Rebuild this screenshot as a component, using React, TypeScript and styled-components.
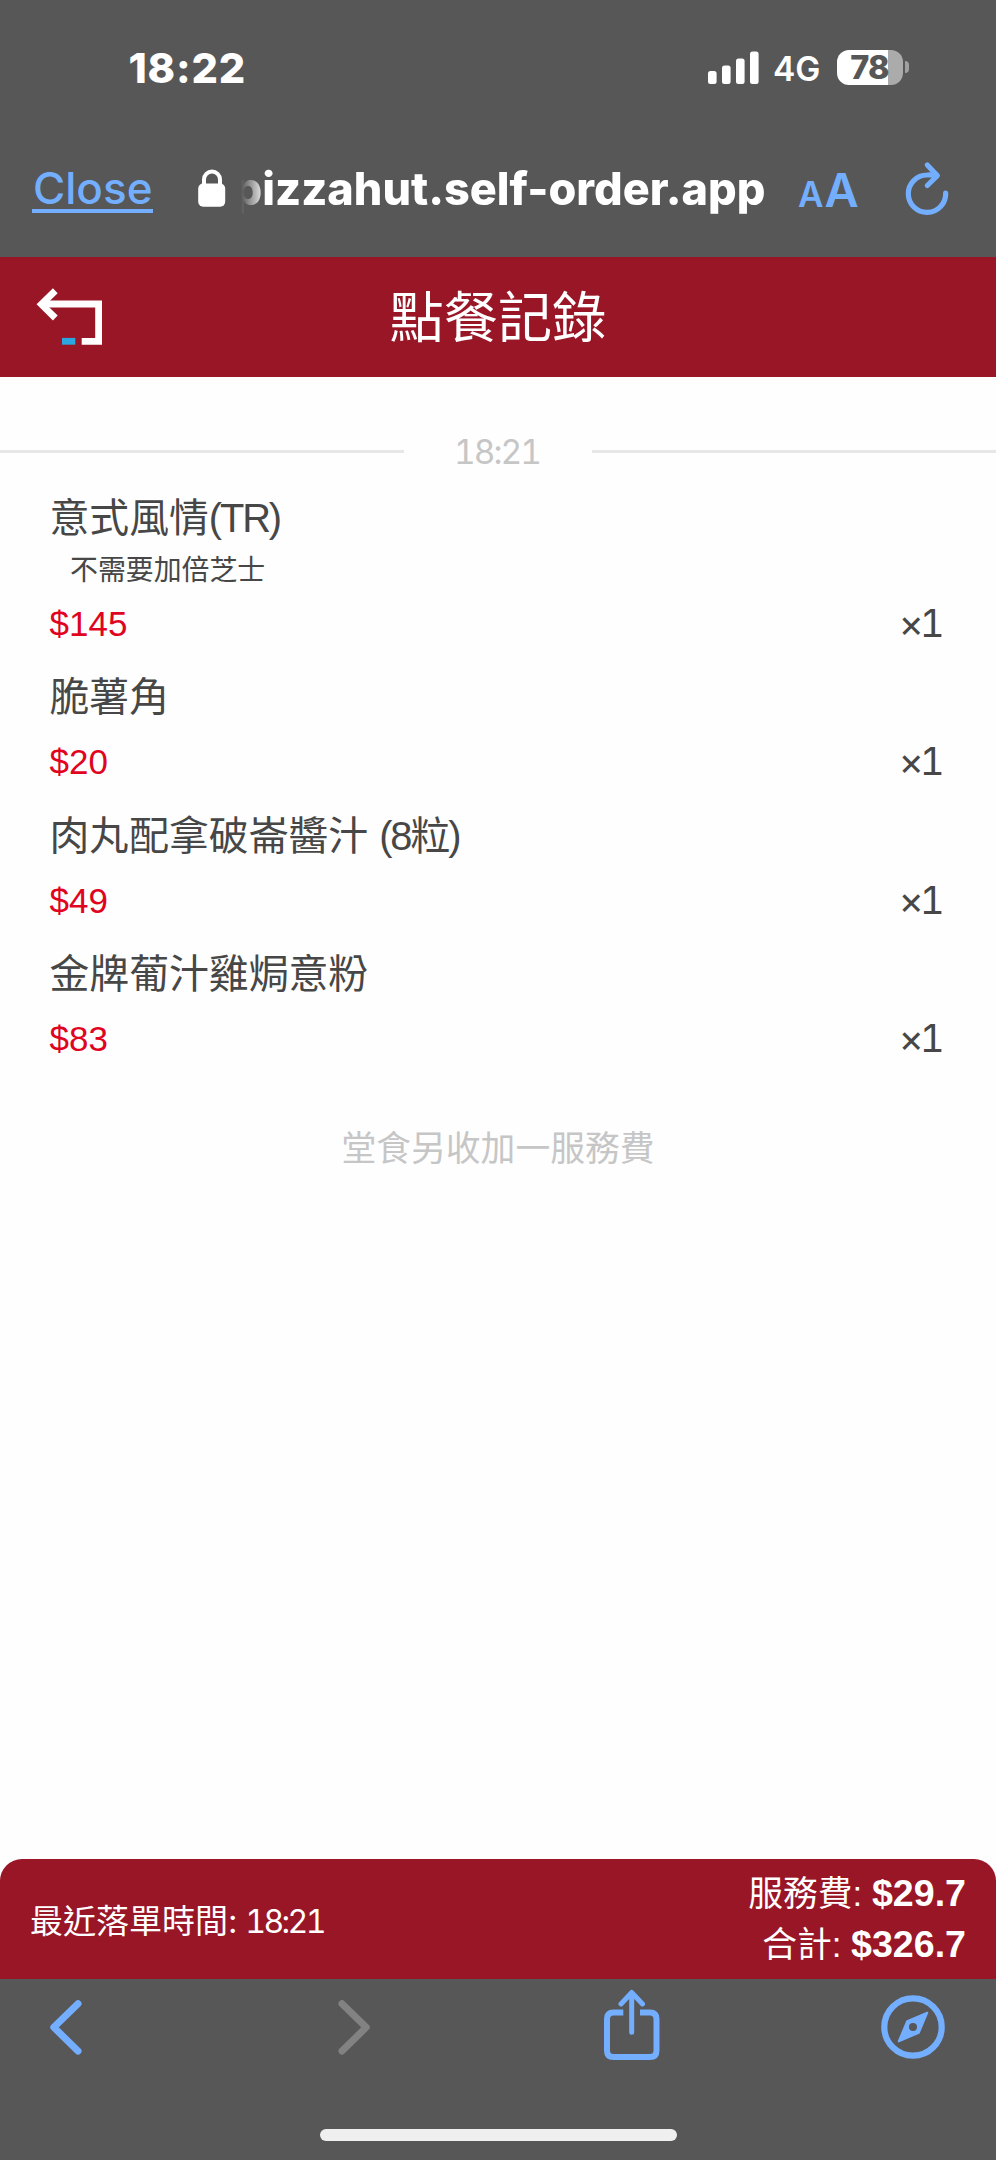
import React from "react";
import styled, { createGlobalStyle } from "styled-components";

const color = {
  chrome: "#575757",
  brand: "#991627",
  link: "#73aeff",
  price: "#e0041f",
  text: "#474747",
  muted: "#c6c6c6",
};

const digits = `Inter, "Noto Sans CJK TC", sans-serif`;
const body = `"Liberation Sans", "Noto Sans CJK TC", sans-serif`;

const GlobalStyle = createGlobalStyle`
  * { box-sizing: border-box; }
  body { margin: 0; background: #fff; }
`;

const Screen = styled.div`
  display: flex;
  flex-direction: column;
  width: 996px;
  height: 2160px;
  overflow: hidden;
  background: #fefefe;
  color: ${color.text};
  font-family: ${body};
  white-space: nowrap;
  svg { display: block; flex: none; }
`;

const StatusBar = styled.div`
  display: flex;
  justify-content: space-between;
  height: 129px;
  padding: 42px 87px 0 128.5px;
  background: ${color.chrome};
  color: #fff;
  font-family: ${digits};
`;

const Clock = styled.div`
  height: 52px;
  line-height: 52px;
  font-size: 41.5px;
  font-weight: 800;
  letter-spacing: 0.8px;
`;

const Indicators = styled.div`
  display: flex;
  align-items: center;
  height: 50px;
`;

const Network = styled.span`
  width: 48px;
  margin: 3px 16px 0 14px;
  font-size: 33.5px;
  line-height: 40px;
  font-weight: 600;
`;

const Battery = styled.div`
  display: flex;
  align-items: center;
  justify-content: center;
  width: 66px;
  height: 35px;
  padding-right: 1px;
  border-radius: 12px;
  background: linear-gradient(90deg, #fff 78%, #ababab 78%);
  color: ${color.chrome};
  font-size: 32.5px;
  line-height: 35px;
  font-weight: 800;
  letter-spacing: -0.8px;
`;

const BatteryTip = styled.div`
  width: 4px;
  height: 12px;
  margin-left: 2px;
  border-radius: 0 5px 5px 0;
  background: #a0a0a0;
`;

const AddressBar = styled.div`
  display: flex;
  height: 128px;
  padding: 30px 45px 0 32px;
  background: ${color.chrome};
  color: #fff;
  font-family: ${digits};
`;

const Close = styled.a`
  width: 121px;
  height: 54px;
  padding-left: 1px;
  border-bottom: 4px solid ${color.link};
  color: ${color.link};
  font-size: 44px;
  font-weight: 500;
  line-height: 59px;
`;

const LockBox = styled.div`
  padding: 10px 0 0 44.5px;
`;

const Url = styled.div`
  display: flex;
  justify-content: flex-end;
  width: 540px;
  height: 60px;
  font-size: 45px;
  font-weight: 800;
  line-height: 59px;
  mask-image: linear-gradient(90deg, transparent 15px, #000 40px);
`;

const TextSize = styled.div`
  display: flex;
  align-items: baseline;
  gap: 1px;
  width: 62px;
  height: 60px;
  margin-left: 32.5px;
  color: ${color.link};
  font-weight: 600;
  line-height: 61px;
`;

const Letter = styled.span<{ $size: number }>`
  font-size: ${(p) => p.$size}px;
`;

const ReloadBox = styled.div`
  margin: -4px 0 0 39.5px;
`;

const Header = styled.header`
  display: grid;
  grid-template-columns: 120px 1fr 120px;
  height: 120px;
  background: ${color.brand};
  color: #fff;
`;

const BackBox = styled.div`
  padding: 30px 0 0 36px;
`;

const Title = styled.h1`
  margin: 0;
  text-align: center;
  font-size: 54.2px;
  font-weight: 400;
  line-height: 122px;
`;

const Orders = styled.main`
  flex: 1;
  background: #fefefe;
`;

const Divider = styled.div`
  display: grid;
  grid-template-columns: 1fr 188px 1fr;
  align-items: center;
  height: 50px;
  margin-top: 49.5px;
  color: ${color.muted};
  font-family: ${digits};
  font-size: 33.5px;
  line-height: 50px;
  text-align: center;
  text-indent: -2px;
  letter-spacing: -2px;
  font-feature-settings: "tnum";
  &::before,
  &::after {
    content: "";
    height: 3px;
    background: #e7e7e7;
  }
`;

const List = styled.ul`
  margin: 9px 0 0;
  padding: 0 55px 0 49.5px;
  list-style: none;
`;

const Item = styled.li`
  padding-bottom: 8.5px;
`;

const Name = styled.div`
  height: 64px;
  font-size: 39.84px;
  line-height: 65px;
`;

const Suffix = styled.span`
  letter-spacing: -2.1px;
`;

const Note = styled.div`
  height: 41px;
  padding-left: 20.5px;
  font-size: 27.9px;
  line-height: 42px;
`;

const PriceRow = styled.div`
  display: flex;
  justify-content: space-between;
  height: 66px;
  line-height: 66px;
`;

const Price = styled.span`
  color: ${color.price};
  font-size: 35px;
`;

const Quantity = styled.span`
  font-family: ${digits};
  font-feature-settings: "tnum";
  font-size: 38.5px;
  line-height: 64px;
  letter-spacing: -3.8px;
`;

const Hint = styled.p`
  margin: 43px 0 0;
  color: ${color.muted};
  font-size: 34.8px;
  line-height: 50px;
  text-align: center;
`;

const Footer = styled.footer`
  display: flex;
  justify-content: space-between;
  height: 120px;
  padding: 0 30px;
  border-radius: 22px 22px 0 0;
  background: ${color.brand};
  color: #fff;
`;

const LastOrder = styled.div`
  font-family: ${digits};
  font-size: 33px;
  line-height: 125px;
  span {
    margin-left: -1.5px;
    font-size: 32px;
    letter-spacing: -2.6px;
    font-feature-settings: "tnum";
  }
`;

const Totals = styled.div`
  padding-top: 9px;
  text-align: right;
`;

const TotalLine = styled.div`
  height: 51px;
  font-size: 34.8px;
  line-height: 51px;
  b { font-size: 37.6px; }
`;

const Toolbar = styled.nav`
  display: flex;
  height: 150px;
  padding: 8px 0 0 48px;
  background: ${color.chrome};
`;

const Tool = styled.div<{ $before?: number }>`
  margin-left: ${(p) => p.$before ?? 0}px;
`;

const HomeArea = styled.div`
  display: flex;
  justify-content: center;
  height: 31px;
  background: ${color.chrome};
`;

const HomeIndicator = styled.div`
  width: 357px;
  height: 12px;
  border-radius: 6px;
  background: #efefef;
`;

const SignalIcon = () => (
  <svg width="51" height="33" viewBox="0 0 51 33" fill="#fff">
    <rect x="0" y="20" width="8.6" height="13" rx="2.5" />
    <rect x="14" y="14.5" width="8.6" height="18.5" rx="2.5" />
    <rect x="28" y="7.5" width="8.6" height="25.5" rx="2.5" />
    <rect x="42" y="0.5" width="8.6" height="32.5" rx="2.5" />
  </svg>
);

const LockIcon = () => (
  <svg width="28" height="38" viewBox="0 0 28 38">
    <path d="M6 17V10.5a8 8 0 0 1 16 0V17" fill="none" stroke="#fff" strokeWidth="4" />
    <rect x="0.2" y="14.5" width="27" height="23.3" rx="5" fill="#fff" />
  </svg>
);

const ReloadIcon = () => (
  <svg width="50" height="62" viewBox="0 0 50 62" fill="none" stroke={color.link} strokeWidth="5.2" strokeLinecap="round" strokeLinejoin="round">
    <path d="M45.7 38A18.7 18.7 0 1 1 27 20Q32 19.6 36.5 20.8" />
    <path d="M27.3 10L37.3 20.6L27.3 30.5" />
  </svg>
);

const BackIcon = () => (
  <svg width="68" height="60" viewBox="0 0 68 60" fill="none" stroke="#fff" strokeWidth="6.8">
    <path d="M19.3 3.7L5.4 17.3L19.3 31" />
    <path d="M6 17H62.6V54.3H45.7" />
    <path d="M26 54.3H39.3" stroke="#2ba6e1" />
  </svg>
);

const ChevronIcon = ({ flip = false, stroke }: { flip?: boolean; stroke: string }) => (
  <svg width="36" height="80" viewBox="0 0 36 80" fill="none" stroke={stroke} strokeWidth="7" strokeLinecap="round" strokeLinejoin="round">
    <path d={flip ? "M6 16.7L30.2 40.3L6 64" : "M30 16.7L5.8 40.3L30 64"} />
  </svg>
);

const ShareIcon = () => (
  <svg width="56" height="80" viewBox="0 0 56 80" fill="none" stroke={color.link} strokeWidth="6">
    <path d="M19.3 25.4H9.5Q3 25.4 3 32V63.5Q3 70 9.5 70H46Q52.5 70 52.5 63.5V32Q52.5 25.4 46 25.4H36" />
    <path d="M27.7 6V45.3M17 17L27.7 5.5L38.5 17" strokeWidth="5" strokeLinecap="round" strokeLinejoin="round" />
  </svg>
);

const CompassIcon = () => (
  <svg width="64" height="80" viewBox="0 0 64 80">
    <circle cx="32" cy="40" r="28.7" fill="none" stroke={color.link} strokeWidth="6.2" />
    <path
      d="M46.3 25.7L37.8 45.8L17.7 54.3L26.2 34.2ZM32 36A4 4 0 1 0 32 44A4 4 0 1 0 32 36Z"
      fill={color.link}
      fillRule="evenodd"
    />
    <path d="M46.3 25.7L37.8 45.8L17.7 54.3L26.2 34.2Z" fill="none" stroke={color.link} strokeWidth="2" strokeLinejoin="round" />
  </svg>
);

const items = [
  { name: "意式風情", suffix: "(TR)", note: "不需要加倍芝士", price: 145, count: 1 },
  { name: "脆薯角", price: 20, count: 1 },
  { name: "肉丸配拿破崙醬汁 ", suffix: "(8粒)", price: 49, count: 1 },
  { name: "金牌葡汁雞焗意粉", price: 83, count: 1 },
];

export default function App() {
  return (
    <Screen>
      <GlobalStyle />
      <StatusBar>
        <Clock>18:22</Clock>
        <Indicators>
          <SignalIcon />
          <Network>4G</Network>
          <Battery>78</Battery>
          <BatteryTip />
        </Indicators>
      </StatusBar>
      <AddressBar>
        <Close>Close</Close>
        <LockBox>
          <LockIcon />
        </LockBox>
        <Url>pizzahut.self-order.app</Url>
        <TextSize>
          <Letter $size={35}>A</Letter>
          <Letter $size={47}>A</Letter>
        </TextSize>
        <ReloadBox>
          <ReloadIcon />
        </ReloadBox>
      </AddressBar>
      <Header>
        <BackBox>
          <BackIcon />
        </BackBox>
        <Title>點餐記錄</Title>
      </Header>
      <Orders>
        <Divider>18:21</Divider>
        <List>
          {items.map((item) => (
            <Item key={item.name}>
              <Name>
                {item.name}
                {item.suffix && <Suffix>{item.suffix}</Suffix>}
              </Name>
              {item.note && <Note>{item.note}</Note>}
              <PriceRow>
                <Price>{`$${item.price}`}</Price>
                <Quantity>{`×${item.count}`}</Quantity>
              </PriceRow>
            </Item>
          ))}
        </List>
        <Hint>堂食另收加一服務費</Hint>
      </Orders>
      <Footer>
        <LastOrder>
          最近落單時間: <span>18:21</span>
        </LastOrder>
        <Totals>
          <TotalLine>
            服務費: <b>$29.7</b>
          </TotalLine>
          <TotalLine>
            合計: <b>$326.7</b>
          </TotalLine>
        </Totals>
      </Footer>
      <Toolbar>
        <Tool>
          <ChevronIcon stroke={color.link} />
        </Tool>
        <Tool $before={252}>
          <ChevronIcon flip stroke="#828282" />
        </Tool>
        <Tool $before={232}>
          <ShareIcon />
        </Tool>
        <Tool $before={220.7}>
          <CompassIcon />
        </Tool>
      </Toolbar>
      <HomeArea>
        <HomeIndicator />
      </HomeArea>
    </Screen>
  );
}
